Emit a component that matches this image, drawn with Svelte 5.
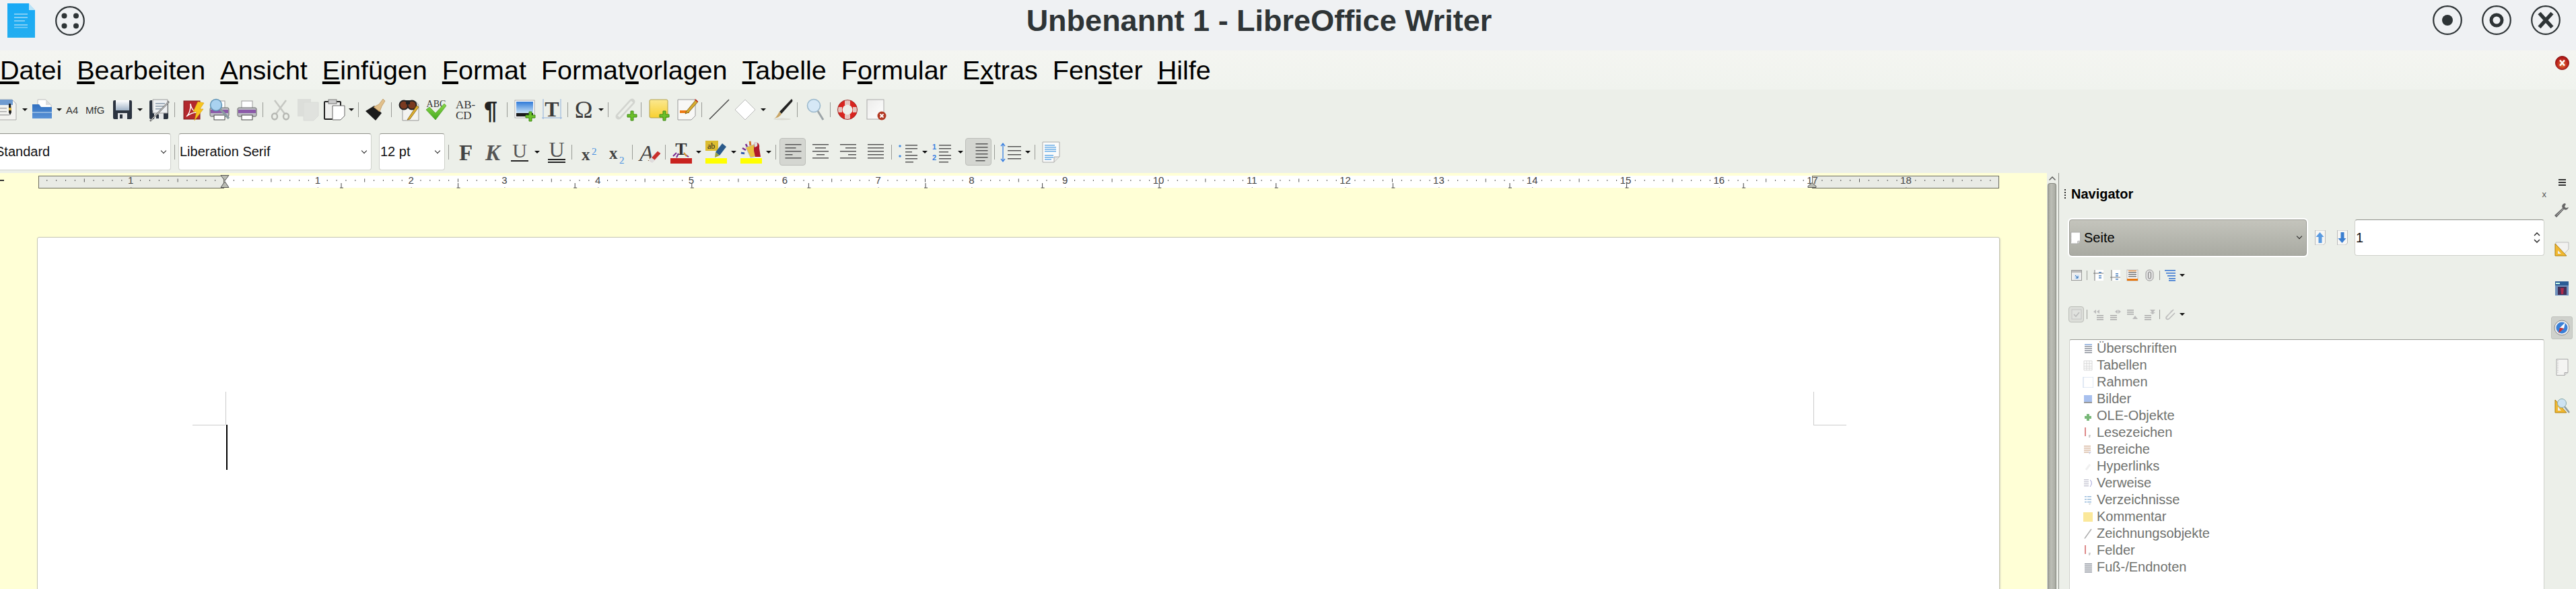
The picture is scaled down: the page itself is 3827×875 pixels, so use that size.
<script>
	const SERIF = 'font-family="Liberation Serif"';
	const SANS = 'font-family="Liberation Sans"';
	const plus = (x, y) =>
		`<path d="M${x - 2} ${y - 7}h4v5h5v4h-5v5h-4v-5h-5v-4h5z" fill="#6cc02a" stroke="#3d8a12" stroke-width="1"/>`;
	const floppy =
		'<rect x="1" y="2" width="28" height="28" rx="2" fill="#2b3340"/><rect x="5" y="2" width="20" height="15" fill="url(#gFloppy)"/><rect x="8" y="21" width="14" height="9" fill="#e4e6e8"/><rect x="11" y="23" width="4" height="6" fill="#2b3340"/>';
	const printer =
		'<rect x="8" y="3" width="16" height="13" fill="#fff" stroke="#999"/><rect x="2" y="13" width="28" height="13" rx="2" fill="#bdbdc4" stroke="#666"/><rect x="3" y="16" width="26" height="5" fill="#8b5aa8"/><rect x="8" y="24" width="16" height="7" fill="#fff" stroke="#444"/>';
	const lines = (rows, color = '#555') =>
		rows.map(([x, y, w]) => `<rect x="${x}" y="${y}" width="${w}" height="1.5" fill="${color}"/>`).join('');

	const icons = {
		new: '<path d="M0 1h26l6 6v24H0z" fill="#f3f3f0" stroke="#aaa"/><rect x="0" y="1" width="27" height="8" fill="#6f9bd0"/>' + lines([[2, 13, 16], [2, 18, 16], [2, 23, 20]], '#aaa') + '<path d="M21 7l3 0 1 13-2 4-2-4z" fill="#222"/><path d="M21 13h4v4h-4z" fill="#d9b441"/>',
		open: '<path d="M9 1h12l8 8v8H9z" fill="#fff" stroke="#bbb"/><path d="M21 1v8h8" fill="#ddd"/><path d="M1 8h10l3 4h16v17H1z" fill="url(#gBlue)"/><rect x="1" y="19" width="29" height="2" fill="#8db4e0"/>',
		save: floppy,
		saveas: floppy + '<path d="M6 1h22v20H6z" fill="#eef0f2" stroke="#999"/>' + lines([[10, 6, 14], [10, 10, 14], [10, 14, 10]], '#89a') + '<path d="M30 4L2 33" stroke="#666" stroke-width="2.5"/><path d="M29 5L3 32" stroke="#eee" stroke-width="1"/>',
		pdf: '<rect x="1" y="3" width="24" height="27" fill="#b3282c" stroke="#7c1a1d"/><path d="M5 26c4-3 7-12 6-19 1 8 4 11 9 13-6 0-10 2-15 6z" fill="none" stroke="#fff" stroke-width="1.4"/><path d="M22 4l9 2-6 9h5L17 32l3-13h-5z" fill="#f6c51e" stroke="#d99a0a" stroke-width=".6"/>',
		preview: printer + '<circle cx="11" cy="9" r="8.5" fill="#a9d2f0" stroke="#5f93b5" stroke-width="1.5"/><path d="M17 15l13 14" stroke="#8a9aa0" stroke-width="3.4"/>',
		print: printer,
		cut: '<path d="M6 2l15 20M23 2L8 22" stroke="#c5c7c2" stroke-width="2.5"/><ellipse cx="6" cy="26" rx="4" ry="4.5" fill="none" stroke="#b5b7b2" stroke-width="2.4"/><ellipse cx="23" cy="26" rx="4" ry="4.5" fill="none" stroke="#b5b7b2" stroke-width="2.4"/>',
		copy: '<rect x="1" y="0" width="20" height="26" fill="#dcdeda"/><path d="M10 5h22v20l-7 7H10z" fill="#e0e2de" stroke="#dadcd8"/>',
		paste: '<rect x="1" y="4" width="24" height="26" rx="1" fill="#f0f0ee" stroke="#222" stroke-width="2"/><rect x="7" y="1" width="12" height="6" fill="#ccc" stroke="#777"/><path d="M13 10h18v15l-6 6H13z" fill="#fff" stroke="#666"/>',
		clone: '<path d="M1 18l13-8 11 11-9 11z" fill="#1b1b1b"/><path d="M13 12l8-4 6-8 3 3-5 8-3 8z" fill="#e2c08a" stroke="#b58d55" stroke-width=".7"/>',
		find: '<path d="M6 4h20l4 5v23H6z" fill="#f3f3f0" stroke="#999"/><circle cx="8" cy="9" r="6.5" fill="#7a3a20" stroke="#222" stroke-width="2"/><circle cx="20" cy="9" r="6.5" fill="#7a3a20" stroke="#222" stroke-width="2"/><rect x="11" y="2" width="6" height="6" fill="#222"/><path d="M27 10L15 28l-2 3 4-1 13-18z" fill="#e0b030" stroke="#7a5a10" stroke-width=".8"/>',
		spell: `<text x="15" y="12" font-size="14" text-anchor="middle" ${SERIF} fill="#333">ABC</text><path d="M0 16l5-4 9 9L27 7l3 3-16 21z" fill="url(#gGreen)" stroke="#3a8f16" stroke-width=".6"/>`,
		hyph: `<text x="0" y="14" font-size="17" ${SERIF} fill="#333">AB-</text><text x="0" y="30" font-size="17" ${SERIF} fill="#333">CD</text>`,
		para: `<text x="15" y="30" font-size="36" font-weight="bold" text-anchor="middle" ${SANS} fill="#222">¶</text>`,
		image: '<rect x="1" y="2" width="29" height="26" fill="#fff" stroke="#aaa"/><rect x="3" y="4" width="25" height="17" fill="url(#gSky)"/><rect x="3" y="21" width="25" height="5" fill="#1a1a1a"/>' + plus(24, 26),
		tframe: `<path d="M2 0v30M28 0v30M0 28h30" stroke="#8fb0dc" stroke-width="1" fill="none"/><text x="15" y="26" font-size="32" font-weight="bold" text-anchor="middle" ${SERIF} fill="#3c3c3c">T</text>`,
		omega: `<text x="13" y="28" font-size="36" text-anchor="middle" ${SERIF} fill="#3c3c3c">Ω</text>`,
		link: '<path d="M4 26L24 4" stroke="#d2d4cf" stroke-width="9" stroke-linecap="round"/><path d="M4 26L24 4" stroke="#ecefe9" stroke-width="4"/>' + plus(24, 25),
		note: '<rect x="0" y="1" width="27" height="27" rx="2" fill="url(#gNote)" stroke="#b0a050"/>' + plus(22, 25),
		comment: '<path d="M1 1h26v24l-6 6H1z" fill="#f8f8f6" stroke="#999"/><rect x="4" y="17" width="14" height="4" fill="#ec7a14"/><path d="M28 1l-14 17-2 4 5-2L31 4z" fill="#d9ac2e" stroke="#6b5010" stroke-width=".8"/><path d="M27 0l4 4-1 1-4-4z" fill="#c22"/>',
		line: '<path d="M1 30L30 1" stroke="#444" stroke-width="1.4"/>',
		diamond: '<path d="M15 1l15 15-15 15L0 16z" fill="#fff" stroke="#bbb"/>',
		brush: '<path d="M29 0c1 1 2 2 1 4L14 22l-3-3z" fill="#222"/><path d="M11 19l3 3c-2 4-6 6-11 7 4-2 5-6 8-10z" fill="#c9a566"/><ellipse cx="15" cy="30" rx="13" ry="1.4" fill="#dcdcd4"/>',
		search: '<circle cx="11" cy="10" r="9.5" fill="#d6e8f6" stroke="#9ab8cc" stroke-width="1.6"/><path d="M17 18l8 13" stroke="#9da5a8" stroke-width="3"/>',
		help: '<circle cx="15" cy="16" r="11" fill="none" stroke="#d8241f" stroke-width="7"/><path d="M11 1h8v8h-8zM11 23h8v8h-8zM-1 12h8v8h-8zM23 12h8v8h-8z" fill="#e8e0da" opacity=".85"/><circle cx="15" cy="16" r="14.5" fill="none" stroke="#8d1815" stroke-width=".8"/>',
		closepage: '<rect x="1" y="1" width="25" height="29" fill="url(#gPage)" stroke="#aaa"/><circle cx="23" cy="25" r="6.5" fill="#b33a24"/><path d="M20.5 22.5l5 5m0-5l-5 5" stroke="#fff" stroke-width="1.8"/>',
		bold: `<text x="16" y="28" font-size="33" font-weight="bold" text-anchor="middle" ${SERIF} fill="#444">F</text>`,
		italic: `<text x="16" y="28" font-size="33" font-weight="bold" font-style="italic" text-anchor="middle" ${SERIF} fill="#555">K</text>`,
		under: `<text x="16" y="24" font-size="30" text-anchor="middle" ${SERIF} fill="#555">U</text><rect x="3" y="28" width="26" height="2" fill="#222"/>`,
		dunder: `<text x="16" y="23" font-size="32" text-anchor="middle" ${SERIF} fill="#555">U</text><rect x="3" y="26" width="26" height="2" fill="#222"/><rect x="3" y="30" width="26" height="2" fill="#222"/>`,
		sup: `<text x="1" y="28" font-size="25" font-weight="bold" ${SERIF} fill="#444">x</text><text x="16" y="20" font-size="15" ${SERIF} fill="#4a90e0">2</text>`,
		sub: `<text x="1" y="26" font-size="25" font-weight="bold" ${SERIF} fill="#444">x</text><text x="16" y="33" font-size="15" ${SERIF} fill="#4a90e0">2</text>`,
		clear: `<text x="0" y="29" font-size="34" font-style="italic" ${SERIF} fill="#444">A</text><path d="M14 28l13-14 5 4-13 14z" fill="#c9302c" stroke="#eee"/><path d="M14 28l4-4 5 4-4 4z" fill="#ddd"/>`,
		tcolor: `<text x="16" y="20" font-size="26" font-weight="bold" text-anchor="middle" ${SERIF} fill="#333">T</text><path d="M4 22l5-5M9 24l3-6M24 22l-4-5M27 23l-6-4" stroke="#7a2a90" stroke-width="2"/><path d="M24 22l-4-5" stroke="#e0a020" stroke-width="2"/><rect x="0" y="25" width="32" height="8" fill="#c9231f"/>`,
		hilite: `<rect x="0" y="-1" width="19" height="15" fill="#dcbc30"/><text x="3" y="11" font-size="12" ${SERIF} fill="#222">ab</text><path d="M25 3l6 5-10 13-6-5z" fill="#2a5a8a"/><path d="M15 16l6 5-7 3z" fill="#9aa040"/><rect x="0" y="25" width="32" height="8" fill="#ffff00"/>`,
		bgcolor: '<path d="M1 17l5 1M3 10l5 3M8 4l3 6M14 0l1 6" stroke="#7a2a90" stroke-width="2.6"/><path d="M1 17l5 1" stroke="#2a60b0" stroke-width="2.6"/><path d="M14 0l1 6" stroke="#e07a20" stroke-width="2.6"/><path d="M8 9l14-5 7 17-14 3z" fill="#e8c040" stroke="#bbb"/><path d="M20 2c6-2 9 2 8 8l2 13h-8l-2-9z" fill="#b01a2a"/><path d="M20 2c4-2 6 0 5 5l-4 2z" fill="#ddd"/><rect x="0" y="25" width="32" height="8" fill="#ffff00"/>',
		alignL: lines([[4.5, 4, 24], [4.5, 9, 16], [4.5, 14, 24], [4.5, 19, 11], [4.5, 24, 24]]),
		alignC: lines([[4, 4, 24], [8, 9, 16], [4, 14, 24], [10, 19, 12], [4, 24, 24]]),
		alignR: lines([[4, 4, 24], [12, 9, 16], [4, 14, 24], [16, 19, 12], [4, 24, 24]]),
		alignJ: lines([[4, 4, 24], [4, 9, 24], [4, 14, 24], [4, 19, 24], [4, 24, 24]]),
		alignB: lines([[11.5, 3, 18], [11.5, 8, 18], [11.5, 13, 18], [11.5, 18, 18], [11.5, 23, 18], [11.5, 28, 14]]),
		bullets: '<circle cx="5" cy="7" r="1.8" fill="#4a90e0"/><circle cx="5" cy="22" r="1.8" fill="#4a90e0"/>' + lines([[13, 5, 18], [13, 10, 18], [13, 15, 10], [13, 20, 18], [13, 25, 18], [13, 30, 12]]),
		numbers: `<text x="0" y="12" font-size="11" font-weight="bold" ${SANS} fill="#3a80e0">1</text><text x="0" y="28" font-size="11" font-weight="bold" ${SANS} fill="#3a80e0">2</text>` + lines([[10, 5, 18], [10, 10, 18], [10, 15, 14], [10, 20, 18], [10, 25, 18], [10, 30, 14]]),
		spacing: '<path d="M4 4v25M1 7l3-4 3 4M1 26l3 4 3-4" stroke="#3a80e0" stroke-width="1.3" fill="none"/>' + lines([[11, 7, 20], [11, 13, 20], [11, 19, 20], [11, 25, 20]]),
		pagefmt: '<path d="M1 1h25v22l-8 8H1z" fill="#fbfbfa" stroke="#aaa"/>' + lines([[4, 5, 15], [4, 8, 17], [4, 11, 17], [4, 14, 17], [4, 20, 13], [4, 23, 13], [4, 26, 10]], '#6aaee8') + '<path d="M18 31v-8h8" fill="#e6e6e2" stroke="#aaa"/>'
	};

	// small icons of the navigator, 16 unit box
	const sm = {
		toggle: '<rect x=".5" y=".5" width="15" height="15" fill="#eee" stroke="#999"/><rect x="1" y="1" width="14" height="3" fill="#bbb"/><rect x="5" y="7" width="7" height="7" fill="#d4e4f6"/><path d="M6 8l4 4m0-3v3H7" stroke="#2266b0" fill="none"/>',
		head: '<rect x="2" y="0" width="13" height="16" fill="#fff"/><path d="M2 0v16M0 5h15" stroke="#777" fill="none"/>' + lines([[8, 3, 4], [8, 8, 4], [8, 11, 4]], '#4a80c0'),
		foot: '<rect x="2" y="0" width="13" height="16" fill="#fff"/><path d="M2 0v16M0 11h15" stroke="#777" fill="none"/>' + lines([[8, 5, 4], [8, 8, 4], [8, 13, 4]], '#4a80c0'),
		anchor: '<rect x="0" y="0" width="16" height="16" fill="#fafafa" stroke="#bbb"/>' + lines([[2, 3, 12], [2, 6, 12], [2, 9, 12]], '#777') + '<rect x="0" y="13" width="16" height="3" fill="#e8770e"/><rect x="2" y="1" width="12" height="1" fill="#e8770e"/>',
		clip: '<rect x="2" y="0" width="11" height="16" rx="5" fill="#e4e4e4" stroke="#999"/><rect x="5.5" y="3" width="4" height="10" rx="2" fill="none" stroke="#777"/>',
		outline: lines([[0, 0, 16], [2, 4, 14], [4, 8, 12], [6, 12, 10], [6, 15, 10]], '#2d6fd0'),
		check: '<rect x="1" y="1" width="14" height="14" fill="#e0e2de" stroke="#c4c4c4"/><path d="M4 8l3 3 5-6" stroke="#bbb" stroke-width="1.6" fill="none"/>',
		pl: '<path d="M0 4l4-3v6zM5 4l4-3v6z" fill="#bbb"/>' + lines([[5, 9, 10], [5, 12, 10], [5, 15, 10]], '#aaa'),
		de: '<path d="M7 4l4-3v6zM12 1l4 3-4 3z" fill="#bbb"/>' + lines([[0, 9, 10], [0, 12, 10], [0, 15, 10]], '#aaa'),
		up: lines([[0, 1, 10], [0, 4, 10], [0, 7, 10]], '#aaa') + '<path d="M8 15l4-5 4 5z" fill="#bbb"/>',
		dn: lines([[0, 9, 10], [0, 12, 10], [0, 15, 10]], '#aaa') + '<path d="M8 1l8 0-4 5z" fill="#bbb"/><path d="M8 5l8 0-4 3z" fill="#bbb"/>',
		paper: '<path d="M13 1L3 11c-3 3 1 6 4 3l8-8" fill="none" stroke="#bbb" stroke-width="1.6"/><path d="M10 2L3 13" stroke="#ccc"/>',
		arrowUp: '<path d="M1 0h15v19l-3 3H1z" fill="#f6f6f4" stroke="#bbb"/><path d="M8 3l6 7h-3v9H6v-9H2z" fill="#5a9ae0"/>',
		arrowDn: '<path d="M1 0h15v19l-3 3H1z" fill="#f6f6f4" stroke="#bbb"/><path d="M8 19l6-7h-3V3H6v9H2z" fill="#3a7ed0"/>',
		seite: '<path d="M.5 .5h15v14l-4 4H.5z" fill="#fff" stroke="#aaa"/><path d="M1 1v16" stroke="#999" stroke-dasharray="1 1"/><path d="M11.5 18.5v-4h4" fill="#ddd" stroke="#aaa"/>'
	};

	const tree = [
		['Überschriften', lines([[3, 1, 11], [3, 4, 11], [3, 7, 11], [3, 10, 11], [3, 13, 11]], '#8a8f9a') + '<rect x="3" y="1" width="11" height="2" fill="#9db8e0"/>'],
		['Tabellen', '<path d="M2 1h12v14H2zM2 5h12M2 9h12M2 12h12M6 1v14M10 1v14" fill="none" stroke="#d8d8d8"/>'],
		['Rahmen', '<rect x="1" y="0" width="15" height="16" fill="#fff" stroke="#c4d4ea"/>'],
		['Bilder', '<rect x="2" y="2" width="12" height="10" fill="#a8c0ee"/><rect x="2" y="12" width="12" height="2" fill="#999"/>'],
		['OLE-Objekte', '<path d="M6 5h4v3h3v4h-3v3H6v-3H3V8h3z" fill="#78b878"/>'],
		['Lesezeichen', '<rect x="3" y="0" width="2" height="13" fill="#d88"/><path d="M9 11l3 0-1 4-2 0z" fill="#ccc"/>'],
		['Bereiche', lines([[2, 2, 10], [2, 5, 10], [2, 8, 10], [2, 11, 7]], '#d8b8a0') + '<path d="M9 11h4l-3 4z" fill="#ccd"/>'],
		['Hyperlinks', '<path d="M5 13l6-8" stroke="#f0f0f0" stroke-width="3"/>'],
		['Verweise', lines([[2, 2, 7], [2, 5, 7], [2, 8, 7], [2, 11, 7]], '#c8c8d4') + '<path d="M11 3c3 2 3 7 0 10" stroke="#9a9ad8" fill="none"/>'],
		['Verzeichnisse', lines([[3, 2, 3], [7, 2, 6], [3, 6, 3], [7, 6, 6], [3, 10, 3], [7, 10, 6]], '#9abcdc') + '<path d="M9 13h4l-3 2z" fill="#ccc"/>'],
		['Kommentar', '<rect x="1" y="1" width="14" height="14" fill="#fbe89a"/>'],
		['Zeichnungsobjekte', '<path d="M3 15L13 1" stroke="#aaa" stroke-width="1.4"/>'],
		['Felder', '<rect x="3" y="0" width="2" height="13" fill="#d88"/><path d="M9 11l3 0-1 4-2 0z" fill="#ccc"/>'],
		['Fuß-/Endnoten', lines([[3, 2, 11], [3, 5, 11], [3, 8, 11], [3, 11, 11], [3, 14, 11]], '#8a8f9a')]
	];

	const tabs = [
		{ svg: '<path d="M16 1c-3 1-5 4-3 7L1 19l3 3 11-12c3 2 6 0 7-3l-4 1-2-2 2-4z" fill="#666"/><path d="M4 19L14 9" stroke="#bbb"/>' },
		{ svg: '<path d="M1 0h19v10l-8 9H1z" fill="#f2f2f0" stroke="#bbb" transform="translate(2 1)"/><path d="M2 3l17 18H2z" fill="#f0b830" stroke="#b08010"/><path d="M6 13l5 5H6z" fill="#eee"/>' },
		{ svg: '<rect x="2" y="1" width="20" height="21" fill="#2b5d96"/><rect x="2" y="7" width="20" height="15" fill="#6e91bd"/><rect x="6" y="9" width="13" height="12" fill="#423058"/><path d="M10 11l5 0-1 9-3 0z" fill="#b02a4a"/><rect x="3" y="3" width="6" height="2" fill="#cfe"/>' },
		{ active: true, svg: '<circle cx="12" cy="12" r="11" fill="#eee" stroke="#888"/><circle cx="12" cy="12" r="8.5" fill="#3a80d8"/><path d="M17 4l-8 8 6 1z" fill="#fff"/><path d="M7 20l2-8 6 1z" fill="#c33"/>' },
		{ svg: '<path d="M4 .5h17v20l-5 4H4z" fill="#f4f4f2" stroke="#aaa"/><path d="M6 2v20" stroke="#aaa" stroke-dasharray="1 1.5"/><path d="M16 24.5v-4h5" fill="#ddd" stroke="#aaa"/>' },
		{ svg: '<path d="M2 3l17 19H2z" fill="#f0b830" stroke="#b08010"/><path d="M6 13l5 6H6z" fill="#eee"/><circle cx="12" cy="8" r="6.5" fill="#cde2f2" stroke="#8aa"/><path d="M16 13l7 9" stroke="#8a9aa0" stroke-width="2.4"/>' }
	];

	const bar1 = [
		{ x: -8, icon: 'new' }, { x: 33, drop: true }, { x: 47, icon: 'open' }, { x: 84, drop: true },
		{ x: 98, label: 'A4' }, { x: 127, label: 'MfG' }, { x: 167, icon: 'save' }, { x: 204, drop: true },
		{ x: 221, icon: 'saveas' }, { x: 259, sep: true }, { x: 272, icon: 'pdf' }, { x: 310, icon: 'preview' },
		{ x: 351, icon: 'print' }, { x: 390, sep: true }, { x: 402, icon: 'cut' }, { x: 441, icon: 'copy' },
		{ x: 481, icon: 'paste' }, { x: 518, drop: true }, { x: 532, sep: true }, { x: 542, icon: 'clone' },
		{ x: 581, sep: true }, { x: 592, icon: 'find' }, { x: 633, icon: 'spell' }, { x: 677, icon: 'hyph' },
		{ x: 714, icon: 'para' }, { x: 753, sep: true }, { x: 764, icon: 'image' }, { x: 805, icon: 'tframe' },
		{ x: 843, sep: true }, { x: 854, icon: 'omega' }, { x: 889, drop: true }, { x: 903, sep: true },
		{ x: 915, icon: 'link' }, { x: 952, sep: true }, { x: 965, icon: 'note' }, { x: 1006, icon: 'comment' },
		{ x: 1042, sep: true }, { x: 1053, icon: 'line' }, { x: 1092, icon: 'diamond' }, { x: 1130, drop: true },
		{ x: 1147, icon: 'brush' }, { x: 1184, sep: true }, { x: 1198, icon: 'search' }, { x: 1233, sep: true },
		{ x: 1244, icon: 'help' }, { x: 1287, icon: 'closepage' }, { x: 1330 }
	];
	const bar2 = [
		{ x: 666, sep: true }, { x: 676, icon: 'bold' }, { x: 716, icon: 'italic' }, { x: 756, icon: 'under' },
		{ x: 794, drop: true }, { x: 811, icon: 'dunder' }, { x: 849, sep: true }, { x: 863, icon: 'sup' },
		{ x: 904, icon: 'sub' }, { x: 939, sep: true }, { x: 950, icon: 'clear' }, { x: 988, sep: true },
		{ x: 996, icon: 'tcolor' }, { x: 1034, drop: true }, { x: 1048, icon: 'hilite' }, { x: 1086, drop: true },
		{ x: 1100, icon: 'bgcolor' }, { x: 1138, drop: true }, { x: 1152, sep: true },
		{ x: 1158, icon: 'alignL', active: true }, { x: 1203, icon: 'alignC' }, { x: 1244, icon: 'alignR' },
		{ x: 1285, icon: 'alignJ' }, { x: 1324, sep: true }, { x: 1332, icon: 'bullets' }, { x: 1370, drop: true },
		{ x: 1385, icon: 'numbers' }, { x: 1423, drop: true }, { x: 1434, icon: 'alignB', active: true },
		{ x: 1477, sep: true }, { x: 1486, icon: 'spacing' }, { x: 1523, drop: true }, { x: 1537, sep: true },
		{ x: 1548, icon: 'pagefmt' }, { x: 1590 }
	];
	const nav1 = [
		{ x: 3, icon: 'toggle' }, { x: 26, sep: true }, { x: 36, icon: 'head' }, { x: 61, icon: 'foot' }, { x: 86, icon: 'anchor' },
		{ x: 112, icon: 'clip' }, { x: 134, sep: true }, { x: 142, icon: 'outline' }, { x: 164, drop: true }, { x: 180 }
	];
	const nav2 = [
		{ x: -1, icon: 'check', active: true }, { x: 26, sep: true }, { x: 36, icon: 'pl' }, { x: 61, icon: 'de' }, { x: 86, icon: 'up' },
		{ x: 112, icon: 'dn' }, { x: 134, sep: true }, { x: 142, icon: 'paper' }, { x: 164, drop: true }, { x: 180 }
	];

	const menus = ['&Datei', '&Bearbeiten', '&Ansicht', '&Einfügen', '&Format', 'Format&vorlagen', '&Tabelle', 'F&ormular', 'E&xtras', 'Fen&ster', '&Hilfe'];
	const splitMenu = (m) => {
		const i = m.indexOf('&');
		return [m.slice(0, i), m[i + 1], m.slice(i + 2)];
	};

	// ruler, one cm is 138.8 px, zero sits at x 333
	const CM = 138.8;
	const ZERO = 333;
	const ticks = [];
	for (let i = -19; i <= 190; i++) {
		const x = ZERO + (i * CM) / 10;
		if (x < 60 || x > 2966) continue;
		if (i % 10 === 0) continue;
		ticks.push({ x, h: i % 5 === 0 ? 5 : 2 });
	}
	const numbers = [{ n: 1, x: ZERO - CM }];
	for (let n = 1; n <= 18; n++) numbers.push({ n, x: ZERO + n * CM });
	const tabStops = [];
	for (let x = 507; x < 2690; x += 173.6) tabStops.push(x);
</script>

{#snippet bar(items, vb, size, start = items[0].x)}
	{#each items as item, i}
		{#if i < items.length - 1}
			<div class="cell" style="width:{items[i + 1].x - item.x}px;margin-left:{i === 0 ? start : 0}px">
				{#if item.sep}
					<span class="sep"></span>
				{:else if item.drop}
					<span class="drop"></span>
				{:else if item.label}
					<span class="label">{item.label}</span>
				{:else if item.active}
					<span class="active">
						<svg viewBox="0 0 {vb} {vb}" width={size} height={size}>{@html icons[item.icon] ?? sm[item.icon]}</svg>
					</span>
				{:else}
					<svg viewBox="0 0 {vb} {vb}" width={size} height={size}>{@html icons[item.icon] ?? sm[item.icon]}</svg>
				{/if}
			</div>
		{/if}
	{/each}
{/snippet}

<svg class="defs" width="0" height="0">
	<defs>
		<linearGradient id="gBlue" x1="0" y1="0" x2="0" y2="1"><stop offset="0" stop-color="#2f6fc0" /><stop offset="1" stop-color="#5b93d6" /></linearGradient>
		<linearGradient id="gFloppy" x1="0" y1="0" x2="0" y2="1"><stop offset="0" stop-color="#fff" /><stop offset="1" stop-color="#9fb2c6" /></linearGradient>
		<linearGradient id="gGreen" x1="0" y1="0" x2="0" y2="1"><stop offset="0" stop-color="#8ad84a" /><stop offset="1" stop-color="#44a81e" /></linearGradient>
		<linearGradient id="gSky" x1="0" y1="0" x2="0" y2="1"><stop offset="0" stop-color="#2f7ad8" /><stop offset="1" stop-color="#c8e2f6" /></linearGradient>
		<linearGradient id="gNote" x1="0" y1="0" x2="0" y2="1"><stop offset="0" stop-color="#fbe890" /><stop offset="1" stop-color="#f8d030" /></linearGradient>
		<linearGradient id="gPage" x1="0" y1="0" x2="1" y2="1"><stop offset="0" stop-color="#ececea" /><stop offset="1" stop-color="#fff" /></linearGradient>
		<linearGradient id="gLogo" x1="0" y1="0" x2="0" y2="1"><stop offset="0" stop-color="#18a9f5" /><stop offset="1" stop-color="#23aef0" /></linearGradient>
		<radialGradient id="gClose" cx=".5" cy=".6" r=".6"><stop offset="0" stop-color="#e88a3a" /><stop offset=".6" stop-color="#c02a20" /><stop offset="1" stop-color="#a01010" /></radialGradient>
	</defs>
</svg>

<div class="window">
	<header class="titlebar">
		<div class="tb-left">
			<svg class="logo" viewBox="0 0 41 51" width="41" height="51">
				<path d="M0 0h32l9 10v41H0z" fill="url(#gLogo)" />
				<path d="M32 0l9 10h-9z" fill="#b9e4f8" />
				<path d="M32 0l9 10V0z" fill="#eff1f3" />
				<g fill="#7fcdf5">
					<rect x="10" y="15" width="20" height="2" />
					<rect x="10" y="20" width="20" height="2" />
					<rect x="10" y="25" width="16" height="2" />
					<rect x="10" y="31" width="20" height="2" />
					<rect x="10" y="35" width="20" height="1.5" />
				</g>
			</svg>
			<svg viewBox="0 0 44 44" width="44" height="44">
				<circle cx="22" cy="22" r="20.8" fill="none" stroke="#2e3436" stroke-width="2.2" />
				<g fill="#2e3436">
					<circle cx="13.5" cy="14.5" r="4" />
					<circle cx="31" cy="14.5" r="4" />
					<circle cx="13.5" cy="29.5" r="4" />
					<circle cx="31" cy="29.5" r="4" />
				</g>
			</svg>
		</div>
		<h1>Unbenannt 1 - LibreOffice Writer</h1>
		<div class="tb-right">
			<svg viewBox="0 0 44 44" width="44" height="44">
				<circle cx="22" cy="22" r="20.8" fill="none" stroke="#2e3436" stroke-width="2.2" />
				<circle cx="22" cy="22" r="8" fill="#2e3436" />
			</svg>
			<svg viewBox="0 0 44 44" width="44" height="44">
				<circle cx="22" cy="22" r="20.8" fill="none" stroke="#2e3436" stroke-width="2.2" />
				<circle cx="22" cy="22" r="8" fill="none" stroke="#2e3436" stroke-width="5" />
			</svg>
			<svg viewBox="0 0 44 44" width="44" height="44">
				<circle cx="22" cy="22" r="20.8" fill="none" stroke="#2e3436" stroke-width="2.2" />
				<path d="M12.5 11.5l19 21m0-21l-19 21" stroke="#2e3436" stroke-width="5.5" />
			</svg>
		</div>
	</header>

	<nav class="menubar">
		<div class="menus">
			{#each menus as m}
				{@const [a, u, b] = splitMenu(m)}
				<span class="menu">{a}<u>{u}</u>{b}</span>
			{/each}
		</div>
		<svg class="doc-close" viewBox="0 0 21 21" width="21" height="21">
			<circle cx="10.5" cy="10.5" r="10" fill="url(#gClose)" stroke="#8a1510" />
			<path d="M7 6.5l7 8m0-8l-7 8" stroke="#fff" stroke-width="2.6" />
		</svg>
	</nav>

	<div class="toolbar t1">
		{@render bar(bar1, 32, 32)}
	</div>

	<div class="toolbar t2">
		<div class="combo standard">Standard<span class="chev"></span></div>
		<div class="tsep"><span class="sep"></span></div>
		<div class="combo fontname">Liberation Serif<span class="chev"></span></div>
		<div class="combo fontsize">12 pt<span class="chev"></span></div>
		{@render bar(bar2, 32, 32, 0)}
	</div>

	<div class="main">
		<section class="doc">
			<svg class="ruler" width="3041" height="30" viewBox="0 0 3041 30">
				<rect x="0" y="10" width="6" height="2" fill="#333" />
				<rect x="333" y="4" width="2359" height="18" fill="#fff" />
				<rect x="57.5" y="4.5" width="275" height="18" fill="#e9ebe5" stroke="#6b6b5e" />
				<rect x="2692.5" y="4.5" width="277" height="18" fill="#e9ebe5" stroke="#6b6b5e" />
				{#each ticks as t}
					<rect x={t.x} y={11 - t.h / 2} width="1" height={t.h} fill="#555" />
				{/each}
				{#each tabStops as x}
					<path d="M{x} 15v7M{x - 2} 22h5" stroke="#444" fill="none" />
				{/each}
				{#each numbers as l}
					<text x={l.x} y="16" class="rnum" text-anchor="middle">{l.n}</text>
					<rect x={l.x} y="21" width="1" height="1" fill="#888" />
				{/each}
				<path d="M328 3.5h12l-6 8zM328 21.5h12l-6-9z" fill="#b9bbb3" stroke="#555" />
				<path d="M2686 21.5h12v-2l-6-5-6 5z" fill="#b9bbb3" stroke="#555" />
			</svg>
			<div class="page">
				<span class="crop c1v"></span>
				<span class="crop c1h"></span>
				<span class="crop c2v"></span>
				<span class="crop c2h"></span>
				<span class="cursor"></span>
			</div>
		</section>

		<div class="vscroll">
			<svg class="sc-up" viewBox="0 0 12 8" width="12" height="8"><path d="M1.5 6.5L6 2l4.5 4.5" fill="none" stroke="#555" stroke-width="1.4" /></svg>
			<div class="thumb"></div>
		</div>

		<aside class="sidebar">
			<div class="deck">
				<div class="deck-title">
					<span class="grip"></span>
					<span class="nav-name">Navigator</span>
					<span class="deck-x">x</span>
				</div>
				<div class="nav-row">
					<div class="nav-select">
						<svg viewBox="0 0 16 19" width="15" height="19">{@html sm.seite}</svg>
						<span>Seite</span>
						<span class="chev"></span>
					</div>
					<svg class="step" viewBox="0 0 17 22" width="18" height="22">{@html sm.arrowUp}</svg>
					<svg class="step s2" viewBox="0 0 17 22" width="18" height="22">{@html sm.arrowDn}</svg>
					<div class="spin">
						<span>1</span>
						<svg viewBox="0 0 10 18" width="10" height="18"><path d="M1 6l4-4 4 4M1 12l4 4 4-4" fill="none" stroke="#222" stroke-width="1.4" /></svg>
					</div>
				</div>
				<div class="navbar n1">{@render bar(nav1, 16, 16)}</div>
				<div class="navbar n2">{@render bar(nav2, 16, 16)}</div>
				<div class="tree">
					{#each tree as [name, ic]}
						<div class="tree-row">
							<svg viewBox="0 0 16 16" width="16" height="16">{@html ic}</svg>
							<span>{name}</span>
						</div>
					{/each}
				</div>
			</div>
			<div class="tabbar">
				<div class="hamb"><i></i><i></i><i></i></div>
				{#each tabs as t}
					<div class="tab">
						<span class:on={t.active}>
							<svg viewBox="0 0 24 25" width="24" height="25">{@html t.svg}</svg>
						</span>
					</div>
				{/each}
			</div>
		</aside>
	</div>
</div>

<style>
	:global(body) {
		margin: 0;
		background: #ecefe9;
	}
	.defs {
		position: absolute;
	}
	.window {
		width: 3827px;
		height: 875px;
		display: flex;
		flex-direction: column;
		overflow: hidden;
		font-family: 'Liberation Sans', sans-serif;
	}
	.titlebar {
		height: 75px;
		flex: none;
		display: flex;
		align-items: center;
		background: #eff1f3;
	}
	.tb-left {
		display: flex;
		align-items: center;
		gap: 30px;
		padding-left: 11px;
		padding-bottom: 15px;
		width: 116px;
	}
	.tb-left svg:last-child {
		margin-top: 1px;
	}
	h1 {
		flex: 1;
		margin: 0;
		padding-bottom: 14px;
		text-align: center;
		font-size: 45px;
		line-height: 50px;
		font-weight: bold;
		color: #2e3436;
	}
	.tb-right {
		display: flex;
		gap: 29px;
		padding-right: 23px;
		padding-bottom: 15px;
	}
	.menubar {
		height: 58px;
		flex: none;
		display: flex;
		justify-content: space-between;
		background: linear-gradient(#f4f5f1, #f0f3ee);
	}
	.menus {
		display: flex;
		gap: 22px;
	}
	.menu {
		font-size: 39.5px;
		line-height: 58px;
		color: #000;
	}
	.menu u {
		text-decoration-thickness: 4px;
		text-underline-offset: 3px;
	}
	.doc-close {
		margin: 8px 10px 0 0;
	}
	.toolbar {
		display: flex;
		flex: none;
		background: #ecefe9;
	}
	.t1 {
		height: 65px;
		padding-top: 14px;
		box-sizing: border-box;
		align-items: flex-start;
	}
	.t2 {
		height: 59px;
		padding-bottom: 4px;
		box-sizing: border-box;
		align-items: center;
	}
	.cell {
		display: flex;
		align-items: center;
		flex: none;
		height: 32px;
	}
	.cell svg {
		overflow: visible;
		flex: none;
	}
	.sep {
		display: block;
		width: 1px;
		height: 22px;
		background: #999b96;
	}
	.drop {
		display: block;
		width: 0;
		height: 0;
		border-left: 4px solid transparent;
		border-right: 4px solid transparent;
		border-top: 4px solid #111;
	}
	.label {
		font-size: 15px;
		color: #333;
	}
	.active {
		display: flex;
		align-items: center;
		justify-content: center;
		width: 39px;
		height: 41px;
		flex: none;
		box-sizing: border-box;
		background: #d4d6d1;
		border: 1px solid #bcbeb9;
		border-radius: 4px;
	}
	.combo {
		position: relative;
		height: 55px;
		flex: none;
		box-sizing: border-box;
		display: flex;
		align-items: center;
		padding-left: 1px;
		background: #fff;
		border: 1px solid #cfd1cb;
		border-top-color: #8f918a;
		border-radius: 4px;
		font-size: 20px;
		color: #111;
	}
	.standard {
		width: 264px;
		margin-left: -10px;
		padding-left: 2px;
	}
	.tsep {
		width: 11px;
		flex: none;
		padding-left: 5px;
		box-sizing: border-box;
	}
	.fontname {
		width: 287px;
	}
	.fontsize {
		width: 98px;
		margin: 0 5px 0 11px;
	}
	.chev {
		position: absolute;
		right: 7px;
		top: 50%;
		width: 6px;
		height: 6px;
		margin-top: -5px;
		box-sizing: border-box;
		border-right: 1.6px solid #222;
		border-bottom: 1.6px solid #222;
		transform: rotate(45deg);
	}
	.main {
		flex: 1;
		display: flex;
		min-height: 0;
	}
	.doc {
		width: 3041px;
		flex: none;
		background: #ffffd6;
		overflow: hidden;
	}
	.ruler {
		display: block;
	}
	.rnum {
		font-family: 'Liberation Sans', sans-serif;
		font-size: 15px;
		fill: #444;
	}
	.page {
		position: relative;
		margin: 65px 0 0 55px;
		width: 2916px;
		height: 600px;
		box-sizing: border-box;
		background: #fff;
		border: 1px solid #c6c7b4;
		border-radius: 3px;
		box-shadow: 1px 1px 2px #d8d8c0;
	}
	.crop {
		position: absolute;
		background: #ccc;
	}
	.c1v {
		left: 279px;
		top: 229px;
		width: 1px;
		height: 49px;
	}
	.c1h {
		left: 230px;
		top: 278px;
		width: 49px;
		height: 1px;
	}
	.c2v {
		left: 2638px;
		top: 229px;
		width: 1px;
		height: 49px;
	}
	.c2h {
		left: 2638px;
		top: 278px;
		width: 49px;
		height: 1px;
	}
	.cursor {
		position: absolute;
		left: 280px;
		top: 278px;
		width: 2px;
		height: 67px;
		background: #000;
	}
	.vscroll {
		width: 18px;
		flex: none;
		box-sizing: border-box;
		border-right: 1px solid #8d8f8a;
		display: flex;
		flex-direction: column;
		align-items: center;
		background: #ecefe9;
		padding: 4px 2px 0 0;
	}
	.sc-up {
		flex: none;
	}
	.thumb {
		margin-top: 3px;
		width: 13px;
		flex: 1;
		box-sizing: border-box;
		background: linear-gradient(90deg, #a5a79f, #bcbeb6 40%, #a8aaa2);
		border: 1px solid #85877f;
		border-bottom: 0;
		border-radius: 4px 4px 0 0;
	}
	.sidebar {
		flex: 1;
		display: flex;
		background: #ecefe9;
		min-width: 0;
	}
	.deck {
		width: 731px;
		flex: none;
		padding: 0 10px 0 15px;
		box-sizing: border-box;
		display: flex;
		flex-direction: column;
	}
	.deck-title {
		display: flex;
		align-items: center;
		margin-top: 20px;
		height: 22px;
		flex: none;
	}
	.grip {
		width: 2px;
		height: 14px;
		margin: 0 8px 0 -7px;
		background: repeating-linear-gradient(#333 0 2px, transparent 2px 4px);
	}
	.nav-name {
		flex: 1;
		font-size: 20px;
		font-weight: bold;
		color: #000;
	}
	.deck-x {
		font-size: 13px;
		color: #555;
		margin-right: -3px;
	}
	.nav-row {
		display: flex;
		align-items: center;
		margin-top: 27px;
		height: 54px;
		flex: none;
	}
	.nav-select {
		position: relative;
		width: 353px;
		height: 54px;
		flex: none;
		box-sizing: border-box;
		display: flex;
		align-items: center;
		gap: 5px;
		padding-left: 1px;
		font-size: 20px;
		color: #000;
		background: linear-gradient(#c4c4bc, #a9aaa2);
		border: 1px solid #9c9d96;
		border-radius: 4px;
		box-shadow: 0 0 0 2px #fff;
	}
	.step {
		margin-left: 11px;
		flex: none;
	}
	.s2 {
		margin-left: 15px;
	}
	.spin {
		width: 282px;
		height: 54px;
		margin-left: 9px;
		flex: none;
		box-sizing: border-box;
		display: flex;
		align-items: center;
		justify-content: space-between;
		padding: 0 5px 0 1px;
		font-size: 20px;
		color: #111;
		background: #fff;
		border: 1px solid #cfd1cb;
		border-top-color: #8f918a;
		border-radius: 4px;
	}
	.navbar {
		display: flex;
		align-items: center;
		flex: none;
	}
	.navbar .cell {
		height: 24px;
	}
	.navbar .sep {
		height: 14px;
	}
	.navbar .active {
		width: 23px;
		height: 24px;
		background: #dcded9;
	}
	.n1 {
		margin-top: 21px;
		height: 16px;
	}
	.n2 {
		margin-top: 38px;
		height: 24px;
	}
	.tree {
		margin-top: 25px;
		flex: 1;
		box-sizing: border-box;
		background: #fff;
		border: 1px solid #cfd1cb;
		border-top-color: #9a9c95;
		border-bottom: 0;
		border-radius: 3px 3px 0 0;
		min-height: 0;
	}
	.tree-row {
		display: flex;
		align-items: center;
		height: 25px;
		padding-left: 19px;
		gap: 5px;
		font-size: 20px;
		color: #6f716e;
	}
	.tabbar {
		flex: 1;
		display: flex;
		flex-direction: column;
		align-items: center;
		padding-right: 6px;
	}
	.hamb {
		margin-top: 9px;
		margin-bottom: 8px;
		height: 10px;
		width: 11px;
		display: flex;
		flex-direction: column;
		justify-content: space-between;
	}
	.hamb i {
		display: block;
		height: 2px;
		background: #333;
	}
	.tab {
		height: 58px;
		display: flex;
		align-items: center;
		justify-content: center;
		flex: none;
	}
	.tab span {
		display: flex;
		align-items: center;
		justify-content: center;
		width: 30px;
		height: 32px;
		border-radius: 3px;
	}
	.tab span.on {
		background: #cfd1cc;
		border: 1px solid #c0c2bd;
	}
</style>
